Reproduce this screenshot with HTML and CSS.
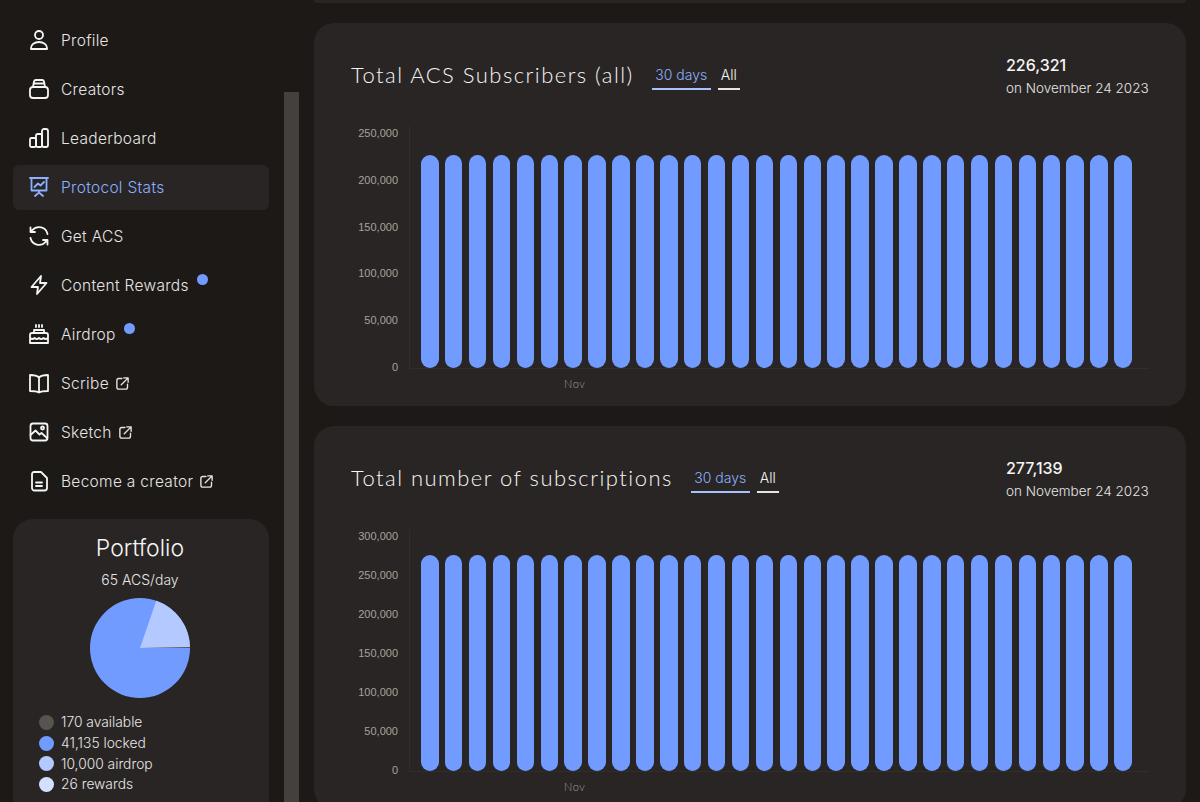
FILE: index.html
```html
<!DOCTYPE html>
<html lang="en">
<head>
<meta charset="utf-8">
<title>Protocol Stats</title>
<link rel="stylesheet" href="styles.css">
</head>
<body>
<div class="app">
  <aside class="sidebar">
    <nav class="nav">
      <a class="nav-item"><svg class="icon" viewBox="0 0 24 24"><circle cx="12" cy="7" r="4"/><path d="M4 21v-1c0-3.500 3.500-6 8-6s8 2.500 8 6v1z"/></svg><span>Profile</span></a>
      <a class="nav-item"><svg class="icon" viewBox="0 0 24 24"><rect x="3" y="10" width="18" height="11" rx="3"/><path d="M6 10l1-5.500A2 2 0 0 1 9 3h6a2 2 0 0 1 2 1.500l1 5.500M6.500 6.500h11"/></svg><span>Creators</span></a>
      <a class="nav-item"><svg class="icon" viewBox="0 0 24 24"><rect x="3" y="12" width="6" height="9" rx="1.500"/><rect x="9" y="8" width="6" height="13" rx="1.500"/><rect x="15" y="3" width="6" height="18" rx="2"/></svg><span>Leaderboard</span></a>
      <a class="nav-item active"><svg class="icon" viewBox="0 0 24 24"><path d="M3 3h18M4.500 3v12.500h15V3M12 15.500v2M8 21l4-3.500 4 3.500M7.500 12l3.500-3.500 2.500 2 3.500-3.500"/></svg><span>Protocol Stats</span></a>
      <a class="nav-item"><svg class="icon" viewBox="0 0 24 24"><path d="M20.500 10A8.700 8.700 0 0 0 5.500 6L3.500 8M3.500 3.500V8H8M3.500 14a8.700 8.700 0 0 0 15 4l2-2M20.500 20.500V16H16"/></svg><span>Get ACS</span></a>
      <a class="nav-item"><svg class="icon" viewBox="0 0 24 24"><path d="M14 3L4.500 14H11l-1 7 9.500-11H13z"/></svg><span>Content Rewards</span><i class="dot"></i></a>
      <a class="nav-item"><svg class="icon" viewBox="0 0 24 24"><path d="M9 3v2M12 3v2M15 3v2M7 11V8h10v3M5 11h14a2 2 0 0 1 2 2v8H3v-8a2 2 0 0 1 2-2zM3 16c2 1.500 3 1.500 4.500 0 1.500 1.500 3 1.500 4.500 0 1.500 1.500 3 1.500 4.500 0 1.500 1.500 2.500 1.500 4.500 0"/></svg><span>Airdrop</span><i class="dot"></i></a>
      <a class="nav-item"><svg class="icon" viewBox="0 0 24 24"><path d="M12 6.500C10 4.500 7 4 3 4v16c4 0 7 .3 9 1.500 2-1.200 5-1.500 9-1.500V4c-4 0-7 .5-9 2.500zM12 6.500v15"/></svg><span>Scribe</span><svg class="ext" viewBox="0 0 24 24"><path d="M11 4H6a3 3 0 0 0-3 3v11a3 3 0 0 0 3 3h11a3 3 0 0 0 3-3v-5M10 14L21 3M14 3h7v7"/></svg></a>
      <a class="nav-item"><svg class="icon" viewBox="0 0 24 24"><rect x="3.500" y="3.500" width="17" height="17" rx="2.500"/><circle cx="15.500" cy="8" r="1.500"/><path d="M3.500 15l5-4.500 4 4 2-1.500 5.500 5"/></svg><span>Sketch</span><svg class="ext" viewBox="0 0 24 24"><path d="M11 4H6a3 3 0 0 0-3 3v11a3 3 0 0 0 3 3h11a3 3 0 0 0 3-3v-5M10 14L21 3M14 3h7v7"/></svg></a>
      <a class="nav-item"><svg class="icon" viewBox="0 0 24 24"><path d="M7 3h7l6 6v10a2.500 2.500 0 0 1-2.500 2.500h-10A2.500 2.500 0 0 1 5 19V5a2 2 0 0 1 2-2zM9 13.500h6M9 17h6"/></svg><span>Become a creator</span><svg class="ext" viewBox="0 0 24 24"><path d="M11 4H6a3 3 0 0 0-3 3v11a3 3 0 0 0 3 3h11a3 3 0 0 0 3-3v-5M10 14L21 3M14 3h7v7"/></svg></a>
    </nav>
    <section class="portfolio">
      <h2 class="portfolio-title">Portfolio</h2>
      <p class="portfolio-rate">65 ACS/day</p>
      <svg class="pie" viewBox="0 0 100 100">
        <circle cx="50" cy="50" r="50" fill="#729bff"/>
        <path d="M50 50L100 50A50 50 0 0 0 66.200 2.700z" fill="#b3c9ff"/>
        <path d="M50 50L100 49 100 50z" fill="#57534e"/>
      </svg>
      <ul class="legend">
        <li><i class="swatch s1"></i>170 available</li>
        <li><i class="swatch s2"></i>41,135 locked</li>
        <li><i class="swatch s3"></i>10,000 airdrop</li>
        <li><i class="swatch s4"></i>26 rewards</li>
      </ul>
    </section>
  </aside>
  <div class="scrollbar"></div>
  <main class="main">
    <div class="card stub"></div>
    <section class="card">
      <header class="card-head">
        <h2 class="card-title">Total ACS Subscribers (all)</h2>
        <div class="tabs"><span class="tab on">30 days</span><span class="tab">All</span></div>
        <div class="stat"><strong>226,321</strong><span>on November 24 2023</span></div>
      </header>
      <div class="chart c1">
        <div class="yaxis"><span>250,000</span><span>200,000</span><span>150,000</span><span>100,000</span><span>50,000</span><span>0</span></div>
        <div class="plot">
          <div class="bars">
            <b></b><b></b><b></b><b></b><b></b><b></b><b></b><b></b><b></b><b></b><b></b><b></b><b></b><b></b><b></b><b></b><b></b><b></b><b></b><b></b><b></b><b></b><b></b><b></b><b></b><b></b><b></b><b></b><b></b><b></b>
          </div>
          <div class="xlabel">Nov</div>
        </div>
      </div>
    </section>
    <section class="card">
      <header class="card-head">
        <h2 class="card-title">Total number of subscriptions</h2>
        <div class="tabs"><span class="tab on">30 days</span><span class="tab">All</span></div>
        <div class="stat"><strong>277,139</strong><span>on November 24 2023</span></div>
      </header>
      <div class="chart c2">
        <div class="yaxis"><span>300,000</span><span>250,000</span><span>200,000</span><span>150,000</span><span>100,000</span><span>50,000</span><span>0</span></div>
        <div class="plot">
          <div class="bars">
            <b></b><b></b><b></b><b></b><b></b><b></b><b></b><b></b><b></b><b></b><b></b><b></b><b></b><b></b><b></b><b></b><b></b><b></b><b></b><b></b><b></b><b></b><b></b><b></b><b></b><b></b><b></b><b></b><b></b><b></b>
          </div>
          <div class="xlabel">Nov</div>
        </div>
      </div>
    </section>
  </main>
</div>
</body>
</html>
```
FILE: styles.css
```css
* { box-sizing: border-box; }
html, body { margin: 0; height: 100%; overflow: hidden; }
body { background: #1c1917; color: #e7e5e4; font-family: "Inter", "Noto Sans", sans-serif; font-weight: 300; }
.app { display: flex; height: 802px; overflow: hidden; position: relative; }

.sidebar { width: 284px; flex: none; padding: 18px 15px 0 13px; }
.nav { display: flex; flex-direction: column; gap: 4px; }
.nav-item { display: flex; align-items: center; height: 45px; padding: 0 14px 1px; border-radius: 6px; font-size: 15.500px; letter-spacing: .3px; color: #e7e5e4; }
.nav-item.active { background: #292524; color: #8cb0ff; }
.icon { width: 24px; height: 24px; margin-right: 10px; flex: none; fill: none; stroke: currentColor; stroke-width: 1.800; stroke-linejoin: round; stroke-linecap: round; color: #f5f5f4; }
.active .icon { color: #8cb0ff; }
.ext { width: 15px; height: 15px; margin-left: 6px; flex: none; fill: none; stroke: #e7e5e4; stroke-width: 2.200; stroke-linecap: round; stroke-linejoin: round; }
.dot { width: 11px; height: 11px; margin: -11px 0 0 8px; border-radius: 50%; background: #729bff; }

.portfolio { margin-top: 15px; height: 300px; padding: 15px 2px 0 0; border-radius: 20px; background: #292524; display: flex; flex-direction: column; align-items: center; }
.portfolio-title { margin: 0; font-size: 23px; font-weight: 300; line-height: 28px; color: #f5f5f4; }
.portfolio-rate { margin: 8px 0 0; font-size: 14px; line-height: 20px; }
.pie { width: 100px; height: 100px; margin-top: 8px; display: block; }
.legend { list-style: none; margin: 14px 0 0; padding: 0 0 0 26px; align-self: stretch; }
.legend li { display: flex; align-items: center; height: 20.700px; font-size: 13.800px; }
.swatch { width: 15px; height: 15px; border-radius: 50%; margin-right: 7px; }
.s1 { background: #57534e; }
.s2 { background: #729bff; }
.s3 { background: #b3c9ff; }
.s4 { background: #d4e0ff; }

.scrollbar { position: absolute; left: 284px; top: 92px; bottom: 0; width: 15px; background: #44403c; }

.main { margin-left: 30px; width: 872px; flex: none; display: flex; flex-direction: column; gap: 20px; }
.card { flex: none; background: #292524; border-radius: 20px; padding: 0 37px; height: 383px; }
.stub { height: 3px; border-radius: 0 0 10px 10px; padding: 0; }
.card-head { display: flex; align-items: flex-start; padding-top: 35px; height: 103px; }
.card-title { margin: 1px 0 0; flex: none; font-family: "Lato", sans-serif; font-size: 22px; font-weight: 300; line-height: 32px; letter-spacing: 1.470px; white-space: nowrap; color: #f5f5f4; }
.tabs { display: flex; gap: 7px; margin-left: 18px; margin-top: 3px; }
.tab { padding: 0 3px; height: 29px; line-height: 27px; font-size: 14px; border-bottom: 2px solid #e7e5e4; color: #f5f5f4; }
.tab.on { color: #8cb0ff; border-color: #a8c2ff; width: 59px; text-align: center; padding: 0; }
.stat { margin-left: auto; width: 143px; display: flex; flex-direction: column; }
.stat strong { font-size: 16px; font-weight: 500; line-height: 22px; margin-top: -4px; color: #f5f5f4; }
.stat span { margin-top: 1px; font-size: 13.500px; line-height: 22px; white-space: nowrap; color: #e7e5e4; }

.chart { display: flex; }
.yaxis { width: 47px; height: 248px; display: flex; flex-direction: column; justify-content: space-between; align-items: flex-end; font-family: "Liberation Sans", sans-serif; font-size: 11px; line-height: 14px; color: #a8a29e; flex: none; }
.plot { margin-left: 11px; flex: 1; }
.bars { display: flex; justify-content: space-between; padding: 0 17px 0 11px; border-left: 1px solid #312d2b; border-bottom: 1px solid #312d2b; }
.bars b { width: 17.500px; background: #729bff; border-radius: 9px; }
.c1 .bars { height: 243px; padding-top: 29px; }
.c2 .bars { height: 243px; padding-top: 26px; }
.xlabel { margin-left: 155px; margin-top: 8px; font-family: "Lato", sans-serif; font-size: 11px; color: #a8a29e; letter-spacing: .6px; }
```
